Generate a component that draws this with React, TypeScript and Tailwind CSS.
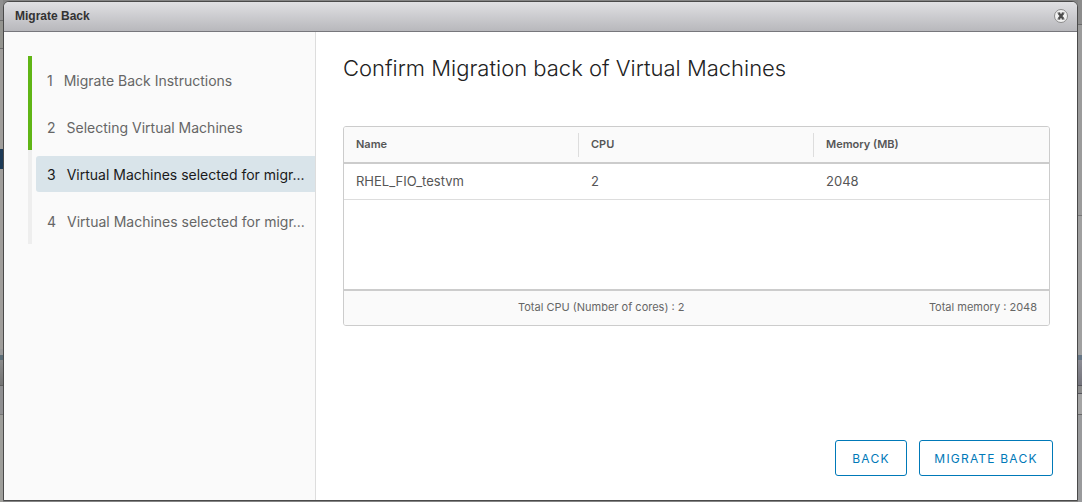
const steps = [
  { label: 'Migrate Back Instructions', state: 'done' },
  { label: 'Selecting Virtual Machines', state: 'done' },
  { label: 'Virtual Machines selected for migr...', state: 'current' },
  { label: 'Virtual Machines selected for migr...', state: 'todo' },
];

const columns = ['Name', 'CPU', 'Memory (MB)'];
const machines = [{ name: 'RHEL_FIO_testvm', cpu: 2, memory: 2048 }];

function LeftEdge() {
  return (
    <div aria-hidden="true" className="flex w-[3px] shrink-0 flex-col">
      <div className="h-[21px] border-b border-[#6a6a6a] bg-[#909090]" />
      <div className="h-7 border-b border-[#6a6a6a] bg-[#94948f]" />
      <div className="h-[100px] bg-[#a09e9b]" />
      <div className="h-5 bg-[#1d3a57]" />
      <div className="h-[180px] bg-[#a09e9b]" />
      <div className="h-1.5 bg-[#999999]" />
      <div className="h-[5px] bg-[#5c6d77]" />
      <div className="h-[26px] border-b border-[#5e5e5e] bg-linear-to-b from-[#8c8c8c] to-[#747474]" />
      <div className="h-[29px] border-b border-[#777777] bg-[#8f8f91]" />
      <div className="flex-1 bg-[#9e9e9a]" />
    </div>
  );
}

function RightEdge() {
  return (
    <div aria-hidden="true" className="flex w-1 shrink-0 flex-col">
      <div className="h-[25px] border-b border-[#6a6a6a] bg-[#8c8c8c]" />
      <div className="h-[191px] border-b border-[#777777] bg-[#9b9b9b]" />
      <div className="h-[139px] bg-[#a0a0a0]" />
      <div className="h-[5px] bg-[#667685]" />
      <div className="h-[26px] border-b border-[#55555c] bg-linear-to-b from-[#8c8c94] to-[#74747c]" />
      <div className="h-2 border-b border-[#55555c] bg-[#8a8a8a]" />
      <div className="h-[21px] border-b border-[#666666] bg-[#a4a4a4]" />
      <div className="flex-1 bg-[#999a9c]" />
    </div>
  );
}

function CloseIcon() {
  return (
    <svg width="16" height="16" viewBox="0 0 16 16" aria-hidden="true">
      <circle cx="8" cy="8" r="6.5" fill="#f2f2f2" stroke="#8b8b8b" />
      <path d="M5.7 5.2 10.3 10.8M10.3 5.2 5.7 10.8" stroke="#4d4d4d" strokeWidth="2.3" />
      <path d="M4.5 5h2.8M8.7 5h2.8M4.5 11h2.8M8.7 11h2.8" stroke="#4d4d4d" strokeWidth="1" />
    </svg>
  );
}

function Steps() {
  return (
    <nav aria-label="Steps" className="w-[312px] shrink-0 border-r border-[#dddddd] bg-[#fafafa] py-6 pl-6">
      <ol>
        {steps.map((step, i) => (
          <li
            key={i}
            className={`border-l-4 pt-1.5 pb-[5px] pl-1 ${step.state === 'done' ? 'border-[#60b515]' : 'border-[#eeeeee]'}`}
          >
            <button
              type="button"
              aria-current={step.state === 'current' ? 'step' : undefined}
              className={`flex h-9 w-full items-center gap-[11px] rounded-l-[3px] pt-0.5 pl-[11px] text-left text-sm whitespace-nowrap ${
                step.state === 'current' ? 'bg-[#d9e4ea] text-[#1a1a1a]' : 'text-[#666666]'
              }`}
            >
              <span>{i + 1}</span>
              <span>{step.label}</span>
            </button>
          </li>
        ))}
      </ol>
    </nav>
  );
}

function MachineGrid() {
  return (
    <div className="overflow-hidden rounded-[3px] border border-[#cccccc]">
      <div className="min-h-[162px]">
        <table className="w-full table-fixed text-left text-[#565656]">
          <thead className="border-b-2 border-[#cccccc] bg-[#fafafa]">
            <tr>
              {columns.map((name, i) => (
                <th key={name} scope="col" className="h-9 p-0 text-[11px] font-semibold">
                  <div
                    className={`flex h-6 items-center border-r pl-3 ${
                      i < columns.length - 1 ? 'border-[#dddddd]' : 'border-transparent'
                    }`}
                  >
                    {name}
                  </div>
                </th>
              ))}
            </tr>
          </thead>
          <tbody>
            {machines.map((vm) => (
              <tr key={vm.name} className="h-9 border-b border-[#dddddd] text-[13px]">
                <td className="pl-3">{vm.name}</td>
                <td className="pl-3">{vm.cpu}</td>
                <td className="pl-3">{vm.memory}</td>
              </tr>
            ))}
          </tbody>
        </table>
      </div>
      <div className="grid h-9 grid-cols-2 items-center border-t-2 border-[#cccccc] bg-[#fafafa] pb-0.5 text-right text-[11px] text-[#666666]">
        <div className="pr-3">Total CPU (Number of cores) : 2</div>
        <div className="pr-3">Total memory : 2048</div>
      </div>
    </div>
  );
}

const buttonStyle =
  'h-9 rounded-[3px] border border-[#0079b8] px-3 pt-0.5 text-xs tracking-widest text-[#0079b8]';

export default function App() {
  return (
    <div className="flex min-h-screen bg-[#858585] font-[Inter,sans-serif]">
      <LeftEdge />
      <div
        role="dialog"
        aria-labelledby="dialog-title"
        className="mt-px mb-px flex min-w-0 flex-1 flex-col overflow-hidden rounded-t-md border border-[#4a4a4a] bg-white"
      >
        <header className="flex h-[30px] items-center justify-between border-b border-[#77777c] bg-linear-to-b from-[#e0e0e3] to-[#b8b8bc] pr-2 pb-0.5 pl-[11px]">
          <h1 id="dialog-title" className="font-['Liberation_Sans',sans-serif] text-xs font-bold text-[#333333]">
            Migrate Back
          </h1>
          <button type="button" aria-label="Close">
            <CloseIcon />
          </button>
        </header>
        <div className="flex flex-1">
          <Steps />
          <main className="flex min-w-0 flex-1 flex-col">
            <div className="flex-1 px-[27px] pt-5">
              <h2 className="mb-[42px] text-[22px] leading-8 font-light text-[#222222]">
                Confirm Migration back of Virtual Machines
              </h2>
              <MachineGrid />
            </div>
            <div className="flex justify-end gap-3 p-6">
              <button type="button" className={`${buttonStyle} min-w-[72px]`}>
                BACK
              </button>
              <button type="button" className={`${buttonStyle} min-w-[134px]`}>
                MIGRATE BACK
              </button>
            </div>
          </main>
        </div>
      </div>
      <RightEdge />
    </div>
  );
}
